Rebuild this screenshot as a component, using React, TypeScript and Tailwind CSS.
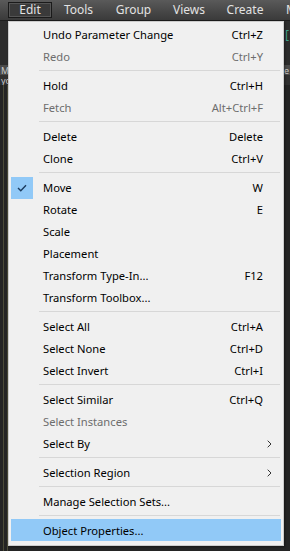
import React from "react";

type Item =
  | { type: "sep" }
  | {
      type: "item";
      label: string;
      shortcut?: string;
      disabled?: boolean;
      checked?: boolean;
      submenu?: boolean;
      active?: boolean;
    };

const items: Item[] = [
  { type: "item", label: "Undo Parameter Change", shortcut: "Ctrl+Z" },
  { type: "item", label: "Redo", shortcut: "Ctrl+Y", disabled: true },
  { type: "sep" },
  { type: "item", label: "Hold", shortcut: "Ctrl+H" },
  { type: "item", label: "Fetch", shortcut: "Alt+Ctrl+F", disabled: true },
  { type: "sep" },
  { type: "item", label: "Delete", shortcut: "Delete" },
  { type: "item", label: "Clone", shortcut: "Ctrl+V" },
  { type: "sep" },
  { type: "item", label: "Move", shortcut: "W", checked: true },
  { type: "item", label: "Rotate", shortcut: "E" },
  { type: "item", label: "Scale" },
  { type: "item", label: "Placement" },
  { type: "item", label: "Transform Type-In...", shortcut: "F12" },
  { type: "item", label: "Transform Toolbox..." },
  { type: "sep" },
  { type: "item", label: "Select All", shortcut: "Ctrl+A" },
  { type: "item", label: "Select None", shortcut: "Ctrl+D" },
  { type: "item", label: "Select Invert", shortcut: "Ctrl+I" },
  { type: "sep" },
  { type: "item", label: "Select Similar", shortcut: "Ctrl+Q" },
  { type: "item", label: "Select Instances", disabled: true },
  { type: "item", label: "Select By", submenu: true },
  { type: "sep" },
  { type: "item", label: "Selection Region", submenu: true },
  { type: "sep" },
  { type: "item", label: "Manage Selection Sets..." },
  { type: "sep" },
  { type: "item", label: "Object Properties...", active: true },
];

const font = { fontFamily: '"Noto Sans", sans-serif' };

function MenuRow({ it }: { it: Item }) {
  if (it.type === "sep") {
    return (
      <div className="h-[7px] flex items-center pl-[28px] pr-[1px]">
        <div className="h-px w-full bg-[#d7d7d7]" />
      </div>
    );
  }
  return (
    <div
      className={`relative h-[22px] flex items-center pl-[32px] pr-[18px] pt-[1px] text-[11.2px] leading-none ${
        it.active ? "bg-[#91c9f7]" : ""
      } ${it.disabled ? "text-[#6d6d6d]" : "text-[#000000]"}`}
    >
      {it.checked && (
        <div className="absolute left-0 top-[1px] w-[22px] h-[22px] bg-[#91c9f7] flex items-center justify-center">
          <svg width="10" height="8" viewBox="0 0 10 8">
            <path d="M1 4 L3.8 6.8 L9 1.2" fill="none" stroke="#1b3b5e" strokeWidth="1.4" />
          </svg>
        </div>
      )}
      <span className="flex-1 whitespace-nowrap">{it.label}</span>
      {it.shortcut && <span className="whitespace-nowrap">{it.shortcut}</span>}
      {it.submenu && (
        <svg className="absolute right-[9px] top-[8px]" width="5" height="8" viewBox="0 0 5 8">
          <path d="M0.7 0.7 L4 4 L0.7 7.3" fill="none" stroke="#333" strokeWidth="1" />
        </svg>
      )}
    </div>
  );
}

export default function App() {
  return (
    <div className="relative w-[290px] h-[551px] overflow-hidden bg-[#262626]" style={font}>
      {/* menu bar */}
      <div className="h-[21px] flex items-stretch pl-[8px] bg-gradient-to-b from-[#5a5a5a] to-[#3a3a3a] border-b border-[#1c1c1c] text-[12px] text-[#e2e2e2] whitespace-nowrap overflow-hidden">
        <div className="shrink-0 w-[44px] my-[2px] flex items-center justify-center bg-[#3a3a3a] border border-[#1a1a1a] shadow-[inset_0_0_0_1px_#555]">
          Edit
        </div>
        <div className="shrink-0 w-[53px] flex items-center justify-center">Tools</div>
        <div className="shrink-0 w-[57px] flex items-center justify-center">Group</div>
        <div className="shrink-0 w-[54px] flex items-center justify-center">Views</div>
        <div className="shrink-0 w-[58px] flex items-center justify-center">Create</div>
        <div className="shrink-0 pl-[12px] flex items-center">Modifiers</div>
      </div>

      {/* background fragments */}
      <div className="flex flex-col">
        <div className="h-[44px] bg-[#2c2c2c] flex justify-end">
          <span className="mr-[1px] mt-[8px] text-[12px] leading-none text-[#3fa08a]">[</span>
        </div>
        <div className="h-[10px] bg-[#4a4a4a] flex justify-between items-center overflow-hidden text-[9px] leading-none text-[#c8c8c8] px-[1px]">
          <span>M</span>
          <span>e</span>
        </div>
        <div className="h-[10px] bg-[#303030] flex items-center overflow-hidden text-[9px] leading-none text-[#c8c8c8] px-[1px]">
          <span>yg</span>
        </div>
        <div className="h-[470px] bg-[#242424] flex">
          <div className="w-[3px]" />
          <div className="w-px bg-[#4b4b38]" />
          <div className="w-[3px]" />
          <div className="w-px bg-[#4b4b38]" />
        </div>
      </div>

      {/* dropdown */}
      <div className="absolute left-[8px] top-[21px] w-[276px] bg-[#f0f0f0] border border-[#cccccc] pt-px px-[2px] pb-[4px] shadow-[1px_1px_2px_rgba(0,0,0,0.4)]">
        {items.map((it, i) => (
          <MenuRow key={i} it={it} />
        ))}
      </div>
    </div>
  );
}
